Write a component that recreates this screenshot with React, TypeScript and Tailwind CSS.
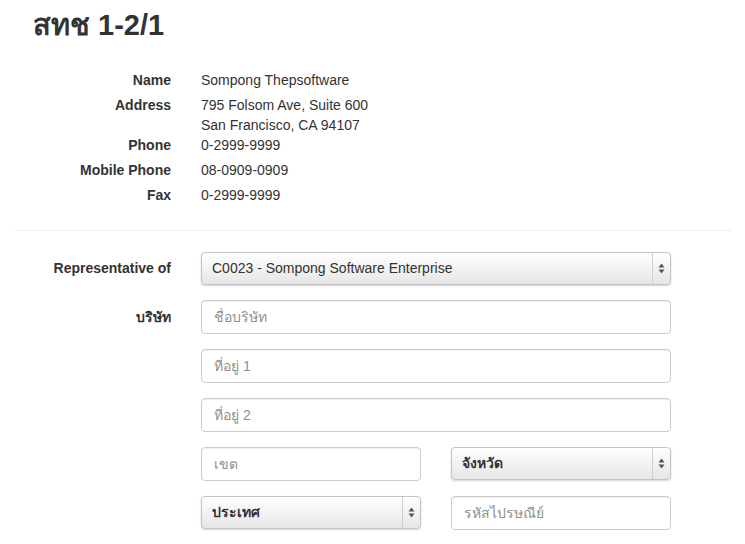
import React from 'react';

const info: { label: string; lines: string[] }[] = [
  { label: 'Name', lines: ['Sompong Thepsoftware'] },
  { label: 'Address', lines: ['795 Folsom Ave, Suite 600', 'San Francisco, CA 94107'] },
  { label: 'Phone', lines: ['0-2999-9999'] },
  { label: 'Mobile Phone', lines: ['08-0909-0909'] },
  { label: 'Fax', lines: ['0-2999-9999'] },
];

const inputClasses =
  "block h-[34px] w-full rounded-[4px] border border-[#cccccc] bg-white px-[12px] text-[14px] text-[#333] shadow-[inset_0_1px_1px_rgba(0,0,0,0.075)] outline-none placeholder:text-[#8f8f8f]";

const Arrows = () => (
  <svg width="7" height="11" viewBox="0 0 7 11" className="block">
    <path d="M3.5 0.5 L6.5 4.5 L0.5 4.5 Z" fill="#555" />
    <path d="M3.5 10.5 L6.5 6.5 L0.5 6.5 Z" fill="#555" />
  </svg>
);

const FakeSelect: React.FC<{ value: string; bold?: boolean }> = ({ value, bold }) => (
  <div className="flex h-[33px] w-full items-stretch rounded-[4px] border border-[#c4c4c4] bg-gradient-to-b from-white to-[#e6e6e6] shadow-[0_1px_2px_rgba(0,0,0,0.18)]">
    <div className={`flex flex-1 items-center pl-[10px] text-[14px] text-[#333] ${bold ? 'font-bold' : ''}`}>{value}</div>
    <div className="flex w-[18px] items-center justify-center border-l border-[#cfcfcf]">
      <Arrows />
    </div>
  </div>
);

const FormRow: React.FC<{ label?: string; children: React.ReactNode }> = ({ label, children }) => (
  <div className="flex items-center">
    <div className="ml-[11px] w-[160px] text-right text-[14px] font-bold text-[#333]">{label}</div>
    <div className="ml-[30px] w-[470px]">{children}</div>
  </div>
);

export default function App() {
  return (
    <div className="h-[544px] w-[745px] overflow-hidden bg-white font-['Liberation_Sans',Arial,sans-serif] text-[14px] text-[#333]">
      <h3 className="mt-[5px] pl-[33px] text-[29px] font-bold leading-[40px]">สทช 1-2/1</h3>

      <dl className="mt-[25px] leading-[20px]">
        {info.map((row) => (
          <div key={row.label} className="flex min-h-[25px]">
            <dt className="ml-[11px] w-[160px] text-right font-bold">{row.label}</dt>
            <dd className="ml-[30px]">
              {row.lines.map((l) => (
                <div key={l}>{l}</div>
              ))}
            </dd>
          </div>
        ))}
      </dl>

      <hr className="mx-[14px] mt-[20px] border-0 border-t border-[#eeeeee]" />

      <div className="mt-[21px] flex flex-col gap-[15px]">
        <FormRow label="Representative of">
          <FakeSelect value="C0023 - Sompong Software Enterprise" />
        </FormRow>
        <FormRow label="บริษัท">
          <input className={inputClasses} placeholder="ชื่อบริษัท" />
        </FormRow>
        <FormRow>
          <input className={inputClasses} placeholder="ที่อยู่ 1" />
        </FormRow>
        <FormRow>
          <input className={inputClasses} placeholder="ที่อยู่ 2" />
        </FormRow>
        <FormRow>
          <div className="grid grid-cols-2 gap-[30px]">
            <input className={inputClasses} placeholder="เขต" />
            <FakeSelect value="จังหวัด" bold />
          </div>
        </FormRow>
        <FormRow>
          <div className="grid grid-cols-2 gap-[30px]">
            <FakeSelect value="ประเทศ" bold />
            <input className={inputClasses} placeholder="รหัสไปรษณีย์" />
          </div>
        </FormRow>
      </div>
    </div>
  );
}
